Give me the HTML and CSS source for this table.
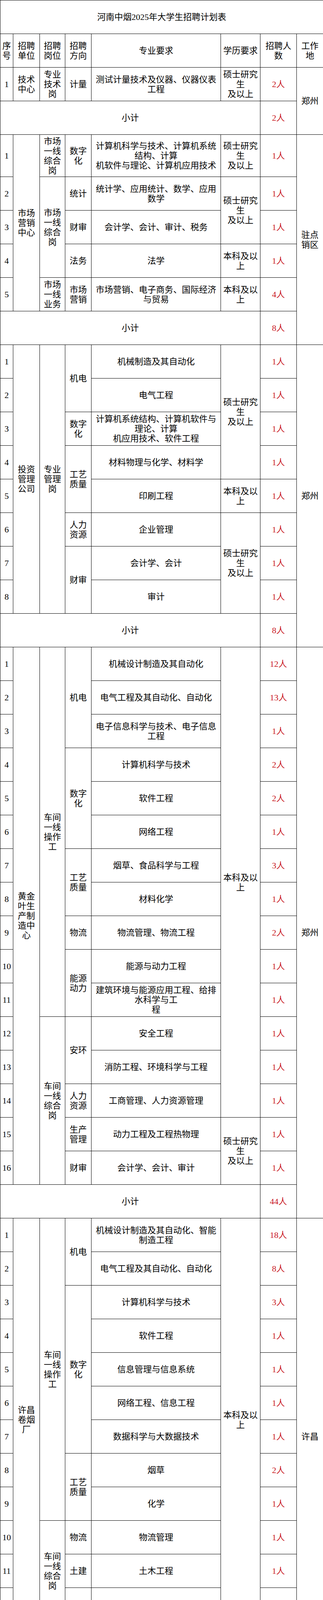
FILE: index.html
```html
<!DOCTYPE html>
<html lang="zh-CN">
<head>
<meta charset="utf-8">
<title>河南中烟2025年大学生招聘计划表</title>
<link rel="stylesheet" href="styles.css">
</head>
<body>
<table class="plan">
<colgroup>
<col class="c-no"><col class="c-unit"><col class="c-post"><col class="c-dir"><col class="c-major"><col class="c-edu"><col class="c-count"><col class="c-place">
</colgroup>
<tbody>
<tr class="r"><td colspan="8" class="title">河南中烟2025年大学生招聘计划表</td></tr>
<tr class="r"><td>序<br>号</td><td>招聘<br>单位</td><td>招聘<br>岗位</td><td>招聘<br>方向</td><td>专业要求</td><td>学历要求</td><td>招聘人<br>数</td><td>工作<br>地</td></tr>

<tr class="r"><td>1</td><td>技术<br>中心</td><td>专业<br>技术<br>岗</td><td>计量</td><td>测试计量技术及仪器、仪器仪表<br>工程</td><td>硕士研究<br>生<br>及以上</td><td class="n">2人</td><td rowspan="2">郑州</td></tr>
<tr class="r"><td colspan="6">小计</td><td class="n">2人</td></tr>

<tr class="r tall"><td>1</td><td rowspan="5">市场<br>营销<br>中心</td><td>市场<br>一线<br>综合<br>岗</td><td>数字<br>化</td><td>计算机科学与技术、计算机系统<br>结构、计算<br>机软件与理论、计算机应用技术</td><td>硕士研究<br>生<br>及以上</td><td class="n">1人</td><td rowspan="6">驻点<br>销区</td></tr>
<tr class="r"><td>2</td><td rowspan="3">市场<br>一线<br>综合<br>岗</td><td>统计</td><td>统计学、应用统计、数学、应用<br>数学</td><td rowspan="2">硕士研究<br>生<br>及以上</td><td class="n">1人</td></tr>
<tr class="r"><td>3</td><td>财审</td><td>会计学、会计、审计、税务</td><td class="n">1人</td></tr>
<tr class="r"><td>4</td><td>法务</td><td>法学</td><td>本科及以<br>上</td><td class="n">1人</td></tr>
<tr class="r"><td>5</td><td>市场<br>一线<br>业务</td><td>市场<br>营销</td><td>市场营销、电子商务、国际经济<br>与贸易</td><td>本科及以<br>上</td><td class="n">4人</td></tr>
<tr class="r"><td colspan="6">小计</td><td class="n">8人</td></tr>

<tr class="r"><td>1</td><td rowspan="8">投资<br>管理<br>公司</td><td rowspan="8">专业<br>管理<br>岗</td><td rowspan="2">机电</td><td>机械制造及其自动化</td><td rowspan="4">硕士研究<br>生<br>及以上</td><td class="n">1人</td><td rowspan="9">郑州</td></tr>
<tr class="r"><td>2</td><td>电气工程</td><td class="n">1人</td></tr>
<tr class="r"><td>3</td><td>数字<br>化</td><td>计算机系统结构、计算机软件与<br>理论、计算<br>机应用技术、软件工程</td><td class="n">1人</td></tr>
<tr class="r"><td>4</td><td rowspan="2">工艺<br>质量</td><td>材料物理与化学、材料学</td><td class="n">1人</td></tr>
<tr class="r"><td>5</td><td>印刷工程</td><td>本科及以<br>上</td><td class="n">1人</td></tr>
<tr class="r"><td>6</td><td>人力<br>资源</td><td>企业管理</td><td rowspan="3">硕士研究<br>生<br>及以上</td><td class="n">1人</td></tr>
<tr class="r"><td>7</td><td rowspan="2">财审</td><td>会计学、会计</td><td class="n">1人</td></tr>
<tr class="r"><td>8</td><td>审计</td><td class="n">1人</td></tr>
<tr class="r"><td colspan="6">小计</td><td class="n">8人</td></tr>

<tr class="r"><td>1</td><td rowspan="16">黄金<br>叶生<br>产制<br>造中<br>心</td><td rowspan="11">车间<br>一线<br>操作<br>工</td><td rowspan="3">机电</td><td>机械设计制造及其自动化</td><td rowspan="14">本科及以<br>上</td><td class="n">12人</td><td rowspan="17">郑州</td></tr>
<tr class="r"><td>2</td><td>电气工程及其自动化、自动化</td><td class="n">13人</td></tr>
<tr class="r"><td>3</td><td>电子信息科学与技术、电子信息<br>工程</td><td class="n">1人</td></tr>
<tr class="r"><td>4</td><td rowspan="3">数字<br>化</td><td>计算机科学与技术</td><td class="n">2人</td></tr>
<tr class="r"><td>5</td><td>软件工程</td><td class="n">2人</td></tr>
<tr class="r"><td>6</td><td>网络工程</td><td class="n">1人</td></tr>
<tr class="r"><td>7</td><td rowspan="2">工艺<br>质量</td><td>烟草、食品科学与工程</td><td class="n">3人</td></tr>
<tr class="r"><td>8</td><td>材料化学</td><td class="n">1人</td></tr>
<tr class="r"><td>9</td><td>物流</td><td>物流管理、物流工程</td><td class="n">2人</td></tr>
<tr class="r"><td>10</td><td rowspan="2">能源<br>动力</td><td>能源与动力工程</td><td class="n">1人</td></tr>
<tr class="r"><td>11</td><td>建筑环境与能源应用工程、给排<br>水科学与工<br>程</td><td class="n">1人</td></tr>
<tr class="r"><td>12</td><td rowspan="5">车间<br>一线<br>综合<br>岗</td><td rowspan="2">安环</td><td>安全工程</td><td class="n">1人</td></tr>
<tr class="r"><td>13</td><td>消防工程、环境科学与工程</td><td class="n">1人</td></tr>
<tr class="r"><td>14</td><td>人力<br>资源</td><td>工商管理、人力资源管理</td><td class="n">1人</td></tr>
<tr class="r"><td>15</td><td>生产<br>管理</td><td>动力工程及工程热物理</td><td rowspan="2">硕士研究<br>生<br>及以上</td><td class="n">1人</td></tr>
<tr class="r"><td>16</td><td>财审</td><td>会计学、会计、审计</td><td class="n">1人</td></tr>
<tr class="r"><td colspan="6">小计</td><td class="n">44人</td></tr>

<tr class="r"><td>1</td><td rowspan="12">许昌<br>卷烟<br>厂</td><td rowspan="9">车间<br>一线<br>操作<br>工</td><td rowspan="2">机电</td><td>机械设计制造及其自动化、智能<br>制造工程</td><td rowspan="12">本科及以<br>上</td><td class="n">18人</td><td rowspan="13">许昌</td></tr>
<tr class="r"><td>2</td><td>电气工程及其自动化、自动化</td><td class="n">8人</td></tr>
<tr class="r"><td>3</td><td rowspan="5">数字<br>化</td><td>计算机科学与技术</td><td class="n">3人</td></tr>
<tr class="r"><td>4</td><td>软件工程</td><td class="n">1人</td></tr>
<tr class="r"><td>5</td><td>信息管理与信息系统</td><td class="n">1人</td></tr>
<tr class="r"><td>6</td><td>网络工程、信息工程</td><td class="n">1人</td></tr>
<tr class="r"><td>7</td><td>数据科学与大数据技术</td><td class="n">1人</td></tr>
<tr class="r"><td>8</td><td rowspan="2">工艺<br>质量</td><td>烟草</td><td class="n">2人</td></tr>
<tr class="r"><td>9</td><td>化学</td><td class="n">1人</td></tr>
<tr class="r"><td>10</td><td rowspan="3">车间<br>一线<br>综合<br>岗</td><td>物流</td><td>物流管理</td><td class="n">1人</td></tr>
<tr class="r"><td>11</td><td>土建</td><td>土木工程</td><td class="n">1人</td></tr>
<tr class="r"><td>12</td><td>财审</td><td>会计学、审计学、工程审计</td><td class="n">1人</td></tr>
<tr class="r"><td colspan="6">小计</td><td class="n">39人</td></tr>

<tr class="r"><td>1</td><td rowspan="16">安阳<br>卷烟<br>厂</td><td rowspan="11">车间<br>一线<br>操作<br>工</td><td rowspan="3">机电</td><td>机械设计制造及其自动化、机械<br>工程、机械<br>电子工程</td><td rowspan="16">本科及以<br>上</td><td class="n">8人</td><td rowspan="17">安阳</td></tr>
<tr class="r"><td>2</td><td>电气工程及其自动化、自动化、<br>电气工程与<br>智能控制</td><td class="n">9人</td></tr>
<tr class="r"><td>3</td><td>电子信息工程、信息工程</td><td class="n">2人</td></tr>
<tr class="r"><td>4</td><td rowspan="4">数字<br>化</td><td>计算机科学与技术、数字媒体技<br>术</td><td class="n">3人</td></tr>
<tr class="r"><td>5</td><td>数据科学与大数据技术</td><td class="n">1人</td></tr>
<tr class="r"><td>6</td><td>信息安全</td><td class="n">1人</td></tr>
<tr class="r"><td>7</td><td>网络工程、软件工程</td><td class="n">1人</td></tr>
<tr class="r"><td>8</td><td>工艺<br>质量</td><td>烟草</td><td class="n">1人</td></tr>
<tr class="r"><td>9</td><td rowspan="3">物流</td><td>物流管理</td><td class="n">1人</td></tr>
<tr class="r"><td>10</td><td>应用统计学、统计学</td><td class="n">1人</td></tr>
<tr class="r"><td>11</td><td>质量管理工程、工业工程</td><td class="n">1人</td></tr>
<tr class="r"><td>12</td><td rowspan="5">车间<br>一线<br>综合<br>岗</td><td>安环</td><td>安全工程</td><td class="n">1人</td></tr>
<tr class="r"><td>13</td><td>党建</td><td>思想政治教育、马克思主义理论</td><td class="n">1人</td></tr>
<tr class="r"><td>14</td><td>宣传</td><td>语言学、汉语言文学、新闻学</td><td class="n">1人</td></tr>
<tr class="r"><td>15</td><td>财审</td><td>会计学、财务管理</td><td class="n">1人</td></tr>
<tr class="r"><td>16</td><td>人力<br>资源</td><td>人力资源管理</td><td class="n">1人</td></tr>
<tr class="r"><td colspan="6">小计</td><td class="n">34人</td></tr>
</tbody>
</table>
</body>
</html>
```

FILE: styles.css
```css
html, body {
  margin: 0;
  padding: 0;
  background: #fff;
}

body {
  width: 826px;
}

.plan {
  width: 826px;
  border-collapse: collapse;
  table-layout: fixed;
  font-family: "Liberation Serif", "Noto Sans CJK SC", serif;
  font-size: 22px;
  line-height: 25px;
  color: #000;
}

.plan td {
  border: 1px solid #000;
  padding: 0 3px;
  text-align: center;
  vertical-align: middle;
}

.c-no { width: 33px; }
.c-unit { width: 68px; }
.c-post { width: 65px; }
.c-dir { width: 67px; }
.c-major { width: 331px; }
.c-edu { width: 101px; }
.c-count { width: 93px; }
.c-place { width: 68px; }

.r { height: 86px; }
.tall { height: 108px; }

.n { color: #c8161d; }
```
